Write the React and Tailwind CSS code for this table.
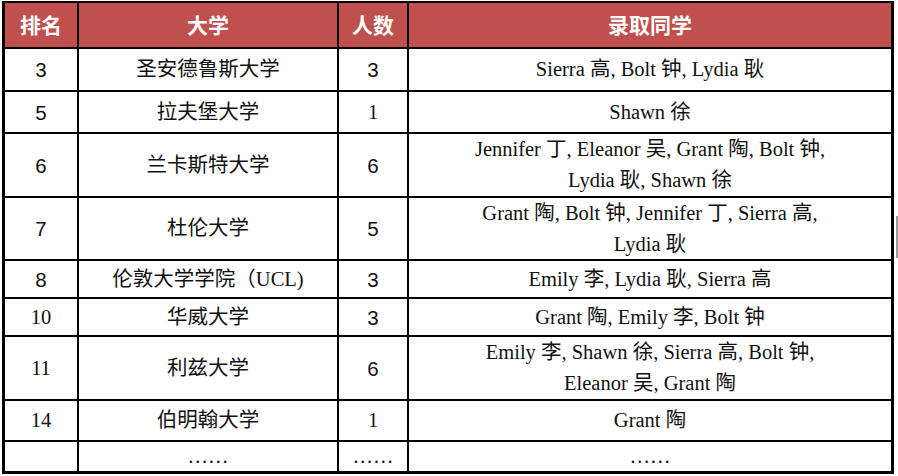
import React from "react";

const serif = { fontFamily: '"Liberation Serif", "Noto Sans CJK SC", serif' };

const rows = [
  { h: "h-[41px]", rank: "3", rs: true, uni: "圣安德鲁斯大学", n: "3", ns: true, names: ["Sierra 高, Bolt 钟, Lydia 耿"] },
  { h: "h-[40px]", rank: "5", rs: true, uni: "拉夫堡大学", n: "1", ns: false, names: ["Shawn 徐"] },
  { h: "h-[62px]", rank: "6", rs: true, uni: "兰卡斯特大学", n: "6", ns: true, names: ["Jennifer 丁, Eleanor 吴, Grant 陶, Bolt 钟,", "Lydia 耿, Shawn 徐"] },
  { h: "h-[61px]", rank: "7", rs: true, uni: "杜伦大学", n: "5", ns: true, names: ["Grant 陶, Bolt 钟, Jennifer 丁, Sierra 高,", "Lydia 耿"] },
  { h: "h-[36px]", rank: "8", rs: true, uni: "伦敦大学学院（UCL)", n: "3", ns: true, names: ["Emily 李, Lydia 耿, Sierra 高"] },
  { h: "h-[36px]", rank: "10", rs: false, uni: "华威大学", n: "3", ns: true, names: ["Grant 陶, Emily 李, Bolt 钟"] },
  { h: "h-[62px]", rank: "11", rs: false, uni: "利兹大学", n: "6", ns: true, names: ["Emily 李, Shawn 徐, Sierra 高, Bolt 钟,", "Eleanor 吴, Grant 陶"] },
  { h: "h-[39px]", rank: "14", rs: false, uni: "伯明翰大学", n: "1", ns: false, names: ["Grant 陶"] },
];

function Cell({ children, className = "", sans = false }) {
  return (
    <div
      className={`bg-white flex flex-col items-center justify-center text-[20.5px] leading-[31px] text-[#111] ${className}`}
      style={sans ? { fontFamily: '"Liberation Sans", "Noto Sans CJK SC", sans-serif' } : serif}
    >
      {children}
    </div>
  );
}

function Head({ children }) {
  return (
    <div
      className="bg-[#c0504d] flex items-center justify-center text-white font-bold text-[21px] h-[44px]"
      style={{ fontFamily: '"Noto Sans CJK SC", "Liberation Sans", sans-serif' }}
    >
      {children}
    </div>
  );
}

export default function App() {
  return (
    <div className="relative w-[898px] h-[476px] bg-white overflow-hidden">
      <div className="ml-[2px] mt-[1px] w-[892px] bg-black pt-[2px] pb-[3px] px-[3px]">
        <div className="grid grid-cols-[72px_258px_68px_482px] gap-[2px]">
          <Head>排名</Head>
          <Head>大学</Head>
          <Head>人数</Head>
          <Head>录取同学</Head>
          {rows.map((r, i) => (
            <React.Fragment key={i}>
              <Cell className={r.h} sans={r.rs}>{r.rank}</Cell>
              <Cell className={r.h}>{r.uni}</Cell>
              <Cell className={r.h} sans={r.ns}>{r.n}</Cell>
              <Cell className={r.h}>
                {r.names.map((t, j) => (
                  <div key={j}>{t}</div>
                ))}
              </Cell>
            </React.Fragment>
          ))}
          <Cell className="h-[29px]"></Cell>
          <Cell className="h-[29px]">……</Cell>
          <Cell className="h-[29px]">……</Cell>
          <Cell className="h-[29px]">……</Cell>
        </div>
      </div>
      <div className="absolute left-[896px] top-[216px] w-[2px] h-[42px] bg-[#9a9a9a]" />
    </div>
  );
}
